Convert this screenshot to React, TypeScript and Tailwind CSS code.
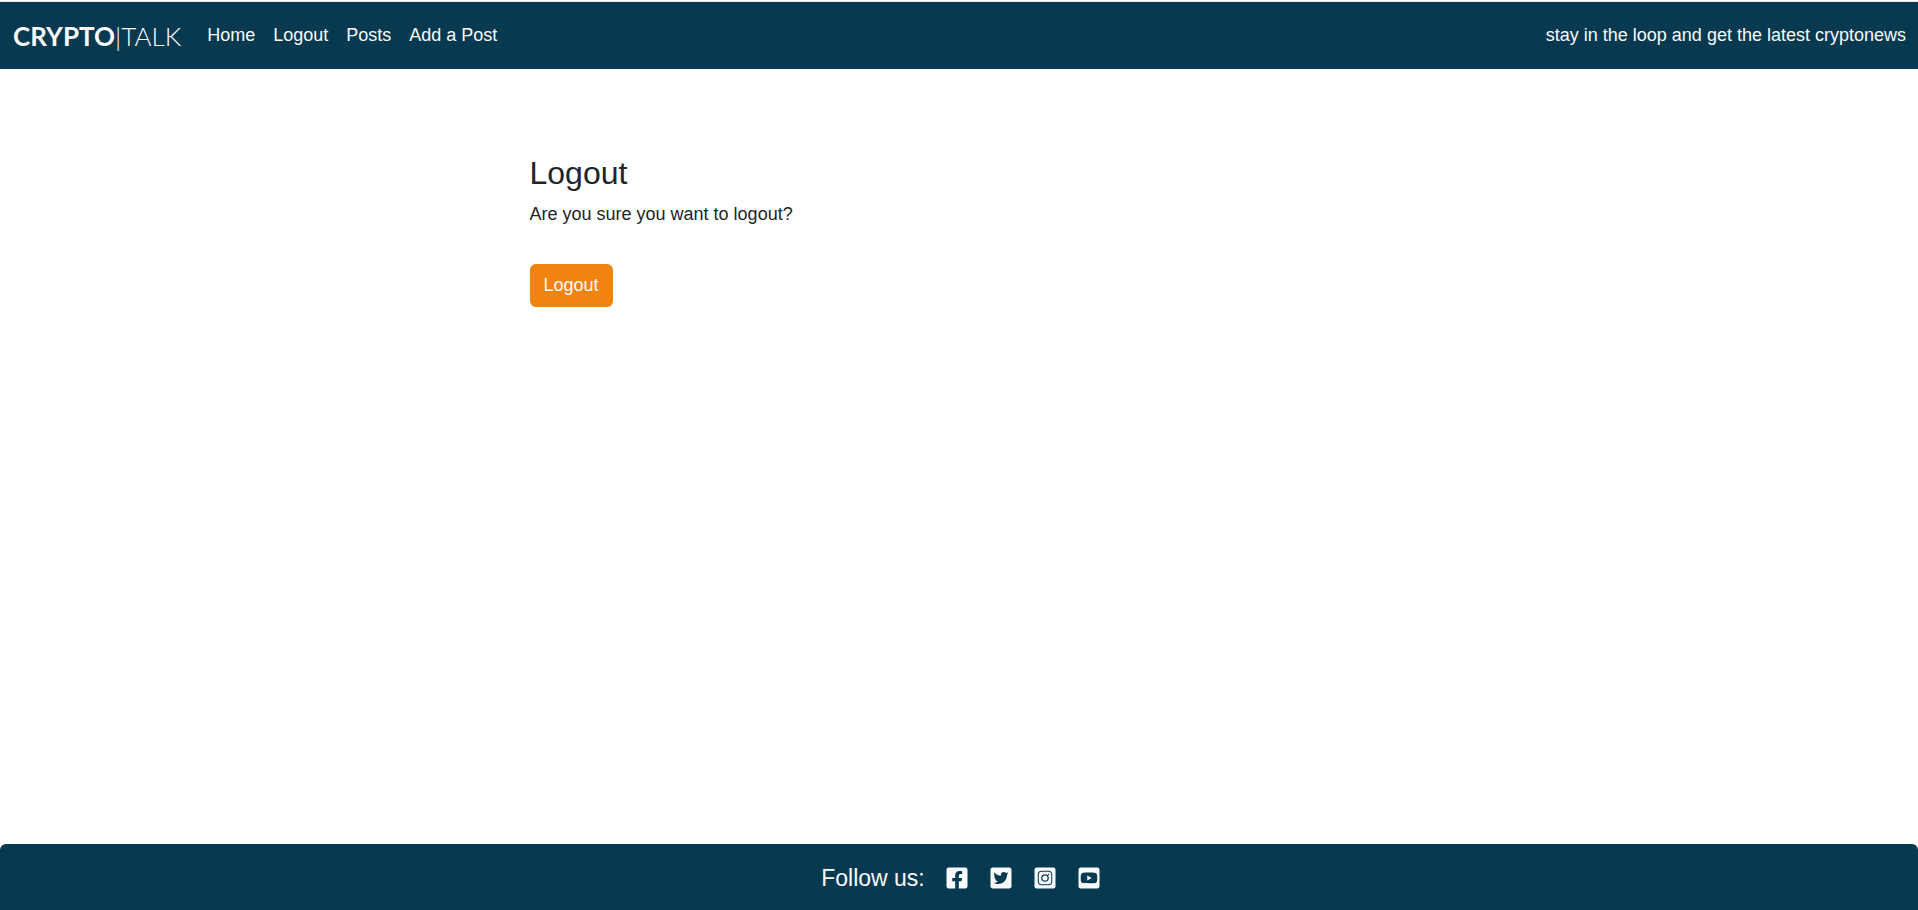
import { FaFacebookSquare, FaTwitterSquare } from "react-icons/fa";

const navLinks = ["Home", "Logout", "Posts", "Add a Post"];

function InstagramSquare({ className }: { className?: string }) {
  return (
    <svg viewBox="0 0 448 512" className={className} aria-hidden="true">
      <rect y="32" width="448" height="448" rx="48" fill="currentColor" />
      <g fill="none" stroke="#073950">
        <rect x="80" y="112" width="288" height="288" rx="76" strokeWidth="22" />
        <circle cx="224" cy="256" r="68" strokeWidth="27" />
      </g>
      <circle cx="299" cy="181" r="18" fill="#073950" />
    </svg>
  );
}

function YoutubeSquare({ className }: { className?: string }) {
  return (
    <svg viewBox="0 0 448 512" className={className} aria-hidden="true">
      <rect y="32" width="448" height="448" rx="48" fill="currentColor" />
      <path
        fill="#073950"
        d="M393 180c-4-16-16-28-32-32-28-8-137-8-137-8s-109 0-137 8c-16 4-28 16-32 32-8 28-8 76-8 76s0 48 8 76c4 16 16 27 32 31 28 8 137 8 137 8s109 0 137-8c16-4 28-15 32-31 8-28 8-76 8-76s0-48-8-76z"
      />
      <path fill="currentColor" d="M187 202l95 54-95 54z" />
    </svg>
  );
}

const socialLinks = [
  { name: "Facebook", Icon: FaFacebookSquare },
  { name: "Twitter", Icon: FaTwitterSquare },
  { name: "Instagram", Icon: InstagramSquare },
  { name: "YouTube", Icon: YoutubeSquare },
];

function Header() {
  return (
    <header className="mt-px flex items-center border-t border-[#e3e7ea] bg-[#073950] px-3 py-3 text-lg text-[#f9fafc]">
      <a href="#" className="mr-[17px] pl-px font-['Lato',sans-serif] text-[26px] leading-10 font-bold">
        CRYPTO<span className="font-light">|TALK</span>
      </a>
      <nav className="flex grow">
        {navLinks.map((label) => (
          <a key={label} href="#" className="px-[9px] py-2 leading-[27px]">
            {label}
          </a>
        ))}
      </nav>
      <span className="leading-[27px]">stay in the loop and get the latest cryptonews</span>
    </header>
  );
}

function LogoutPanel() {
  return (
    <main className="grid grow grid-cols-12 content-start px-3 pt-[84px]">
      <div className="col-span-6 col-start-4 px-11">
        <h1 className="mb-2 text-[32px] leading-10">Logout</h1>
        <p className="text-lg leading-[27px]">Are you sure you want to logout?</p>
        <form className="mt-9" onSubmit={(event) => event.preventDefault()}>
          <button type="submit" className="rounded-md bg-[#f2830f] px-3.5 py-2 text-lg leading-[27px] text-[#f9fafc]">
            Logout
          </button>
        </form>
      </div>
    </main>
  );
}

function Footer() {
  return (
    <footer className="flex items-center justify-center rounded-t-md bg-[#073950] pt-[17px] pb-[15px] pl-1 text-[#f9fafc]">
      <h2 className="mr-5 text-[23px] leading-[34px]">Follow us:</h2>
      <ul className="flex gap-5">
        {socialLinks.map(({ name, Icon }) => (
          <li key={name}>
            <a href="#" aria-label={name}>
              <Icon className="size-6" />
            </a>
          </li>
        ))}
      </ul>
    </footer>
  );
}

export default function App() {
  return (
    <div className="flex min-h-screen flex-col bg-white font-['Liberation_Sans',Arial,sans-serif] text-[#212529]">
      <Header />
      <LogoutPanel />
      <Footer />
    </div>
  );
}
